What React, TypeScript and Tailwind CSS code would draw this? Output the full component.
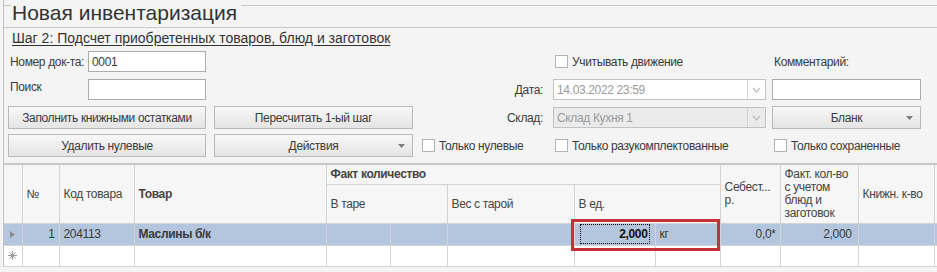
import type { ReactNode } from "react";

const font = "[font-family:'Liberation_Sans',Arial,sans-serif]";

function Chevron() {
	return (
		<svg width="9" height="6" viewBox="0 0 9 6">
			<path d="M1 1l3.5 4L8 1" fill="none" stroke="#bdbdbd" strokeWidth="1.2" />
		</svg>
	);
}

function Caret() {
	return (
		<svg width="7" height="4" viewBox="0 0 7 4">
			<path d="M0 0h7L3.5 4z" fill="#7c7c7c" />
		</svg>
	);
}

function Checkbox({ label }: { label: string }) {
	return (
		<label className="flex items-center gap-[4px] whitespace-nowrap">
			<span className="size-[13px] shrink-0 border border-[#b4b4b4] bg-white" />
			<span>{label}</span>
		</label>
	);
}

function Input({ value = "", className = "" }: { value?: string; className?: string }) {
	return (
		<div
			className={`flex h-[21px] items-center border border-[#ababab] bg-white px-[3px] ${className}`}
		>
			{value}
		</div>
	);
}

function Select({ value, disabled }: { value: string; disabled?: boolean }) {
	return (
		<div
			className={`flex h-[21px] w-[213px] items-center border border-[#c2c2c2] text-[#9a9a9a] ${
				disabled ? "bg-[#ebebeb]" : "bg-white"
			}`}
		>
			<span className="flex-1 px-[3px]">{value}</span>
			<span className="flex h-full w-[18px] items-center justify-center border-l border-[#d4d4d4]">
				<Chevron />
			</span>
		</div>
	);
}

function Button({
	children,
	caret,
	className = "",
}: {
	children: ReactNode;
	caret?: boolean;
	className?: string;
}) {
	return (
		<div
			className={`relative flex h-[23px] items-center justify-center whitespace-nowrap border border-[#b9b9b9] bg-linear-to-b from-[#f8f8f8] to-[#e4e4e4] ${className}`}
		>
			{children}
			{caret && (
				<span className="absolute right-[7px] top-[9px] flex">
					<Caret />
				</span>
			)}
		</div>
	);
}

function RowIndicator() {
	return (
		<svg width="5" height="7" viewBox="0 0 5 7">
			<path d="M0 0l5 3.5L0 7z" fill="#8a8a8a" />
		</svg>
	);
}

function NewRowMark() {
	return (
		<svg width="9" height="9" viewBox="0 0 9 9" stroke="#9a9a9a" strokeWidth="1">
			<path d="M4.5 0v9M0 4.5h9M1.3 1.3l6.4 6.4M7.7 1.3L1.3 7.7" />
		</svg>
	);
}

const th = "border-r border-b border-[#d4d4d4] px-[4px] text-left align-middle";
const td = "border-r border-b border-[#d4d4d4] px-[4px] h-[21px] whitespace-nowrap";

export default function App() {
	return (
		<div
			className={`relative h-[272px] w-[937px] overflow-hidden bg-[#f4f4f4] text-[12px] tracking-[-0.35px] text-[#3a3a3a] ${font}`}
		>
			<div className="ml-[3px] mt-[5px] border-l border-[#c4c4c4]">
				{/* Title */}
				<div className="-mt-[5px] flex h-[28px] items-start border-b border-[#c8c8c8]">
					<div className="h-[6px] w-[7px] border-b border-[#c8c8c8]" />
					<h1 className="px-[1px] text-[21px] leading-[26px] tracking-normal text-[#333]">
						Новая инвентаризация
					</h1>
					<div className="ml-[3px] h-[6px] flex-1 border-b border-[#c8c8c8]" />
				</div>

				<p className="mt-[2px] pl-[8px] text-[14px] leading-[17px] tracking-normal text-[#333] underline underline-offset-2">
					Шаг 2: Подсчет приобретенных товаров, блюд и заготовок
				</p>

				{/* Form */}
				<div className="mt-[4px] pl-[4px]">
					<div className="flex h-[21px] items-center">
						<div className="flex w-[198px] items-center">
							<span className="w-[80px] whitespace-nowrap pl-[2px]">Номер док-та:</span>
							<Input value="0001" className="w-[118px]" />
						</div>
						<div className="w-[349px]" />
						<div className="w-[219px]">
							<Checkbox label="Учитывать движение" />
						</div>
						<span>Комментарий:</span>
					</div>

					<div className="mt-[7px] flex h-[21px] items-center">
						<div className="flex w-[198px] items-center">
							<span className="-mt-[6px] w-[80px] pl-[2px]">Поиск</span>
							<Input className="w-[118px]" />
						</div>
						<div className="flex w-[347px] justify-end pr-[10px]">Дата:</div>
						<Select value="14.03.2022 23:59" />
						<Input className="ml-[6px] w-[149px]" />
					</div>

					<div className="mt-[6px] flex items-center">
						<Button className="w-[198px]">Заполнить книжными остатками</Button>
						<Button className="ml-[8px] w-[199px]">Пересчитать 1-ый шаг</Button>
						<div className="flex w-[140px] justify-end pr-[10px]">Склад:</div>
						<Select value="Склад Кухня 1" disabled />
						<Button caret className="ml-[6px] h-[22px] w-[149px]">
							Бланк
						</Button>
					</div>

					<div className="mt-[5px] flex items-center">
						<Button className="w-[198px]">Удалить нулевые</Button>
						<Button caret className="ml-[8px] w-[199px]">
							Действия
						</Button>
						<div className="ml-[9px] w-[133px]">
							<Checkbox label="Только нулевые" />
						</div>
						<div className="w-[219px]">
							<Checkbox label="Только разукомплектованные" />
						</div>
						<Checkbox label="Только сохраненные" />
					</div>
				</div>

				{/* Table */}
				<table className="mt-[6px] w-[933px] table-fixed border-collapse border-t-2 border-[#c8c8c8] text-[12px]">
					<colgroup>
						<col className="w-[18px]" />
						<col className="w-[37px]" />
						<col className="w-[75px]" />
						<col className="w-[192px]" />
						<col className="w-[64px]" />
						<col className="w-[57px]" />
						<col className="w-[127px]" />
						<col className="w-[81px]" />
						<col className="w-[65px]" />
						<col className="w-[60px]" />
						<col className="w-[78px]" />
						<col className="w-[76px]" />
						<col className="w-[3px]" />
					</colgroup>
					<thead className="bg-[#f6f6f6] text-[#444]">
						<tr className="h-[20px]">
							<th rowSpan={2} className={th} />
							<th rowSpan={2} className={`${th} font-normal`}>
								№
							</th>
							<th rowSpan={2} className={`${th} font-normal`}>
								Код товара
							</th>
							<th rowSpan={2} className={`${th} font-bold`}>
								Товар
							</th>
							<th colSpan={5} className={`${th} font-bold`}>
								Факт количество
							</th>
							<th rowSpan={2} className={`${th} font-normal leading-[13px]`}>
								Себест...
								<br />
								р.
							</th>
							<th rowSpan={2} className={`${th} whitespace-nowrap font-normal leading-[13px]`}>
								Факт. кол-во
								<br />с учетом
								<br />
								блюд и
								<br />
								заготовок
							</th>
							<th rowSpan={2} className={`${th} whitespace-nowrap font-normal`}>
								Книжн. к-во
							</th>
							<th rowSpan={2} className="border-b border-[#d4d4d4]" />
						</tr>
						<tr className="h-[39px]">
							<th colSpan={2} className={`${th} font-normal`}>
								В таре
							</th>
							<th className={`${th} font-normal`}>Вес с тарой</th>
							<th colSpan={2} className={`${th} font-normal`}>
								В ед.
							</th>
						</tr>
					</thead>
					<tbody>
						<tr className="h-[22px] bg-[#b4c6dd]">
							<td className={`${td} px-0`}>
								<span className="flex justify-center">
									<RowIndicator />
								</span>
							</td>
							<td className={`${td} text-right`}>1</td>
							<td className={td}>204113</td>
							<td className={`${td} font-bold`}>Маслины б/к</td>
							<td className={td} />
							<td className={td} />
							<td className={td} />
							<td className={`${td} p-0`}>
								<div className="mx-[1px] flex h-[20px] items-center justify-end border border-dotted border-black pr-[1px] font-bold text-[#111]">
									2,000
								</div>
							</td>
							<td className={td}>кг</td>
							<td className={`${td} text-right`}>0,0*</td>
							<td className={`${td} pr-[6px] text-right`}>2,000</td>
							<td className={td} />
							<td className="border-b border-[#d4d4d4]" />
						</tr>
						<tr className="bg-white">
							<td className={`${td} px-0`}>
								<span className="flex justify-center">
									<NewRowMark />
								</span>
							</td>
							<td className={td} />
							<td className={td} />
							<td className={td} />
							<td className={td} />
							<td className={td} />
							<td className={td} />
							<td className={td} />
							<td className={td} />
							<td className={td} />
							<td className={td} />
							<td className={td} />
							<td className="border-b border-[#d4d4d4]" />
						</tr>
					</tbody>
				</table>
			</div>

			{/* highlight over the edited cell */}
			<div className="absolute left-[571px] top-[219px] h-[32px] w-[149px] border-[3px] border-[#c6303a]" />
		</div>
	);
}
